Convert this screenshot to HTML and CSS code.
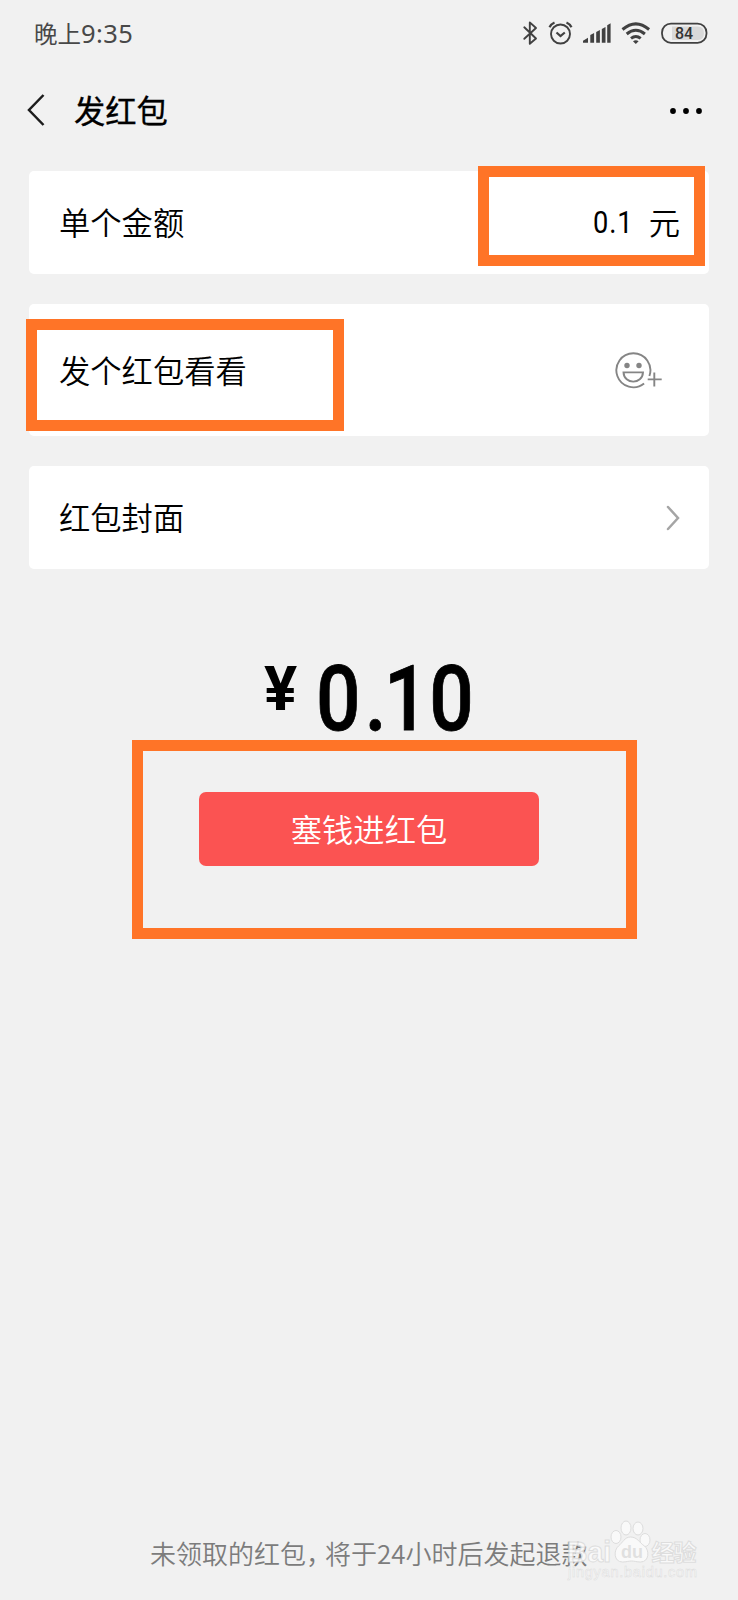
FILE: index.html
```html
<!DOCTYPE html>
<html lang="zh-CN">
<head>
<meta charset="utf-8">
<title>发红包</title>
<link rel="stylesheet" href="styles.css">
</head>
<body>
<div class="screen">
  <header class="status">
    <span class="time">晚上<span class="clock">9:35</span></span>
    <svg class="status-icons" width="190" height="30" viewBox="0 0 190 30" fill="none" stroke="#414141">
      <path d="M4.3 9.3 16 20.5 9.8 25.8V4.4L16 10 4.3 20.8" stroke-width="1.9" stroke-linejoin="round" stroke-linecap="round"/>
      <circle cx="40.5" cy="16" r="9.5" stroke-width="1.9"/>
      <path d="m36.500 14.500 4 3.600 4.300-3.600M29.500 9.200Q31 6 34.500 4.400M51.500 9.200Q50 6 46.500 4.400" stroke-width="2.200"/>
      <path d="M63 24.700v-2l5-3v5zM70.300 24.700v-7.600l3.800-2v9.600zM76.200 24.700V14l3.700-2v12.700zM81.800 24.700V11l3.700-2v15.700zM87.200 24.700V7.200l3.400-2v19.500z" fill="#414141" stroke="none"/>
      <path d="M102.500 11.500q13.300-11.200 26.600 0M106.700 16q9.100-7.500 18.200 0M111 20.400q4.900-3.800 9.700 0" stroke-width="3"/>
      <path d="M113 23.300q2.800-2.300 5.600 0l-2.800 2.600z" fill="#414141" stroke="none"/>
      <path d="M152 8.500h26q6 0 6 6.700t-6 6.700h-26z" fill="#d9d9d9" stroke="none"/>
      <rect x="142" y="5.600" width="44.500" height="19.200" rx="9" stroke-width="1.800"/>
      <text x="155" y="21" class="battery">84</text>
    </svg>
  </header>
  <nav class="titlebar">
    <svg width="18" height="32" viewBox="0 0 18 32" fill="none" stroke="#1c1c1c" stroke-width="2.500"><path d="M16.500 1 2 16l14.500 15"/></svg>
    <h1>发红包</h1>
    <svg class="more" width="34" height="8" viewBox="0 0 34 8"><circle cx="4" cy="4" r="2.900"/><circle cx="17" cy="4" r="2.900"/><circle cx="30" cy="4" r="2.900"/></svg>
  </nav>
  <main>
    <section class="card">
      <span class="label">单个金额</span>
      <span class="value"><span class="num">0.1</span><span>元</span></span>
      <i class="mark mark-amount"></i>
    </section>
    <section class="card tall">
      <span class="label">发个红包看看</span>
      <svg class="emoji" width="48" height="38" viewBox="0 0 48 38" fill="none" stroke="#858585" stroke-width="1.900">
        <path d="M34.400 24a17 17 0 1 0-5.300 7.500"/>
        <path d="M8.500 20.400h19.500c-.6 12.300-18.900 12.300-19.500 0z"/>
        <path d="M39.300 20.500v14M32.700 27.400h14"/>
        <circle cx="12" cy="13.500" r="2.700" fill="#858585" stroke="none"/><circle cx="24" cy="13.500" r="2.700" fill="#858585" stroke="none"/>
      </svg>
      <i class="mark mark-message"></i>
    </section>
    <section class="card">
      <span class="label">红包封面</span>
      <svg class="chevron" width="14" height="26" viewBox="0 0 14 26" fill="none" stroke="#a5a5a5" stroke-width="2.500" stroke-linecap="round"><path d="m2 2 10 11L2 24"/></svg>
    </section>
    <div class="total"><span class="yen">¥</span><span class="sum">0<span class="dot">.</span>10</span></div>
    <div class="action">
      <button class="pay">塞钱进红包</button>
      <i class="mark mark-pay"></i>
    </div>
  </main>
  <footer>
    <p>未领取的红包<span class="comma">，</span>将于24小时后发起退款</p>
    <svg class="watermark" width="140" height="70" viewBox="0 0 140 70">
      <g fill="#fbfbfb" stroke="#dadada" stroke-width="1">
        <text x="5" y="42" class="wm-big" textLength="44" lengthAdjust="spacingAndGlyphs">Bai</text>
        <ellipse cx="54" cy="17" rx="5" ry="6.500"/><ellipse cx="64" cy="8" rx="5" ry="7"/><ellipse cx="76" cy="8.500" rx="5" ry="6.500"/><ellipse cx="83" cy="20" rx="5" ry="6.500"/>
        <path d="M68.500 17c-6 0-8 6-12 9-5 4-5 16 4 16 4 0 6-1 9-1s5 1 9 1c9 0 9-12 4-16-5-3-7-9-14-9z"/>
        <text x="89.500" y="41" class="wm-cn" textLength="45">经验</text>
        <text x="6" y="57" class="wm-url" textLength="129">jingyan.baidu.com</text>
      </g>
      <text x="59" y="38" class="wm-du">du</text>
    </svg>
  </footer>
</div>
</body>
</html>
```
FILE: styles.css
```css
* { box-sizing: border-box; }
body { margin: 0; background: #f1f1f1; }
.screen {
  width: 738px;
  height: 1600px;
  display: flex;
  flex-direction: column;
  overflow: hidden;
  color: #000;
  font-family: "Noto Sans CJK SC", sans-serif;
}
.status {
  height: 67px;
  padding: 0 28px 2px 34px;
  display: flex;
  align-items: center;
  justify-content: space-between;
}
.time { font-size: 23.500px; line-height: 34px; color: #484848; }
.clock { font-family: "Noto Sans", sans-serif; font-size: 25.500px; letter-spacing: .4px; }
.battery { font: 500 16px Roboto, sans-serif; fill: #333; stroke: none; }
.titlebar {
  height: 86px;
  padding: 0 35px 0 27px;
  display: flex;
  align-items: center;
}
.titlebar h1 {
  margin: 0 0 0 29px;
  font-size: 31.300px;
  font-weight: 400;
  line-height: 44px;
  -webkit-text-stroke: .3px #000;
}
.more { margin: 2px 0 0 auto; }
main {
  flex: 1;
  padding: 18px 29px 0;
  display: flex;
  flex-direction: column;
}
.card {
  position: relative;
  height: 103px;
  margin-bottom: 30px;
  padding: 0 29px 0 30px;
  display: flex;
  align-items: center;
  justify-content: space-between;
  background: #fff;
  border-radius: 5px;
  font-size: 31.300px;
  line-height: 46px;
  font-weight: 350;
}
.label, .value { padding-bottom: 2px; }
.tall .label { padding-bottom: 0; }
.tall { height: 132px; }
.value { display: flex; gap: 15px; align-items: center; }
.num {
  font-family: Roboto, sans-serif;
  font-weight: 400;
  letter-spacing: 1px;
  padding-top: 2px;
  transform: scaleX(.87);
  transform-origin: right;
}
.emoji { margin: 2px 17px 0 0; }
.mark { position: absolute; border: 11px solid #ff7427; pointer-events: none; }
.mark-amount { left: 449px; top: -5px; width: 227px; height: 100px; }
.mark-message { left: -3px; top: 15px; width: 318px; height: 112px; }
.mark-pay { left: -67px; top: -52px; width: 505px; height: 199px; }
.total {
  height: 193px;
  padding: 42px 0 0 235px;
  display: flex;
  font-family: Roboto, sans-serif;
}
.yen { width: 35px; padding-top: 10px; font-size: 62px; font-weight: 700; line-height: 76px; margin-right: 17px; }
.sum {
  font-size: 91px;
  font-weight: 500;
  line-height: 116px;
  letter-spacing: 1px;
  -webkit-text-stroke: .8px #000;
  transform: scaleX(.86);
  transform-origin: left;
}
.dot { margin: 0 -4px 0 4px; }
.action { position: relative; width: 340px; margin-left: 170px; }
.pay {
  display: block;
  width: 340px;
  height: 74px;
  padding: 0 0 2px;
  border: 0;
  border-radius: 7px;
  background: #fb5352;
  color: #fff;
  font: 350 31.300px "Noto Sans CJK SC", sans-serif;
}
footer {
  position: relative;
  height: 80px;
  padding-left: 150px;
}
footer p {
  margin: 14px 0 0;
  font-size: 26px;
  font-weight: 350;
  line-height: 38px;
  color: #7c7c7c;
  white-space: nowrap;
}
.comma { margin-right: -7px; }
.watermark { position: absolute; left: 562px; top: 0; opacity: .85; }
.wm-big { font: 700 30px "Liberation Sans", sans-serif; }
.wm-cn { font: 700 23px "Noto Sans CJK SC", sans-serif; }
.wm-url { font: 14.500px "Liberation Sans", sans-serif; stroke-width: .5px; }
.wm-du { font: 700 18px "Liberation Sans", sans-serif; fill: #dedede; }
```
